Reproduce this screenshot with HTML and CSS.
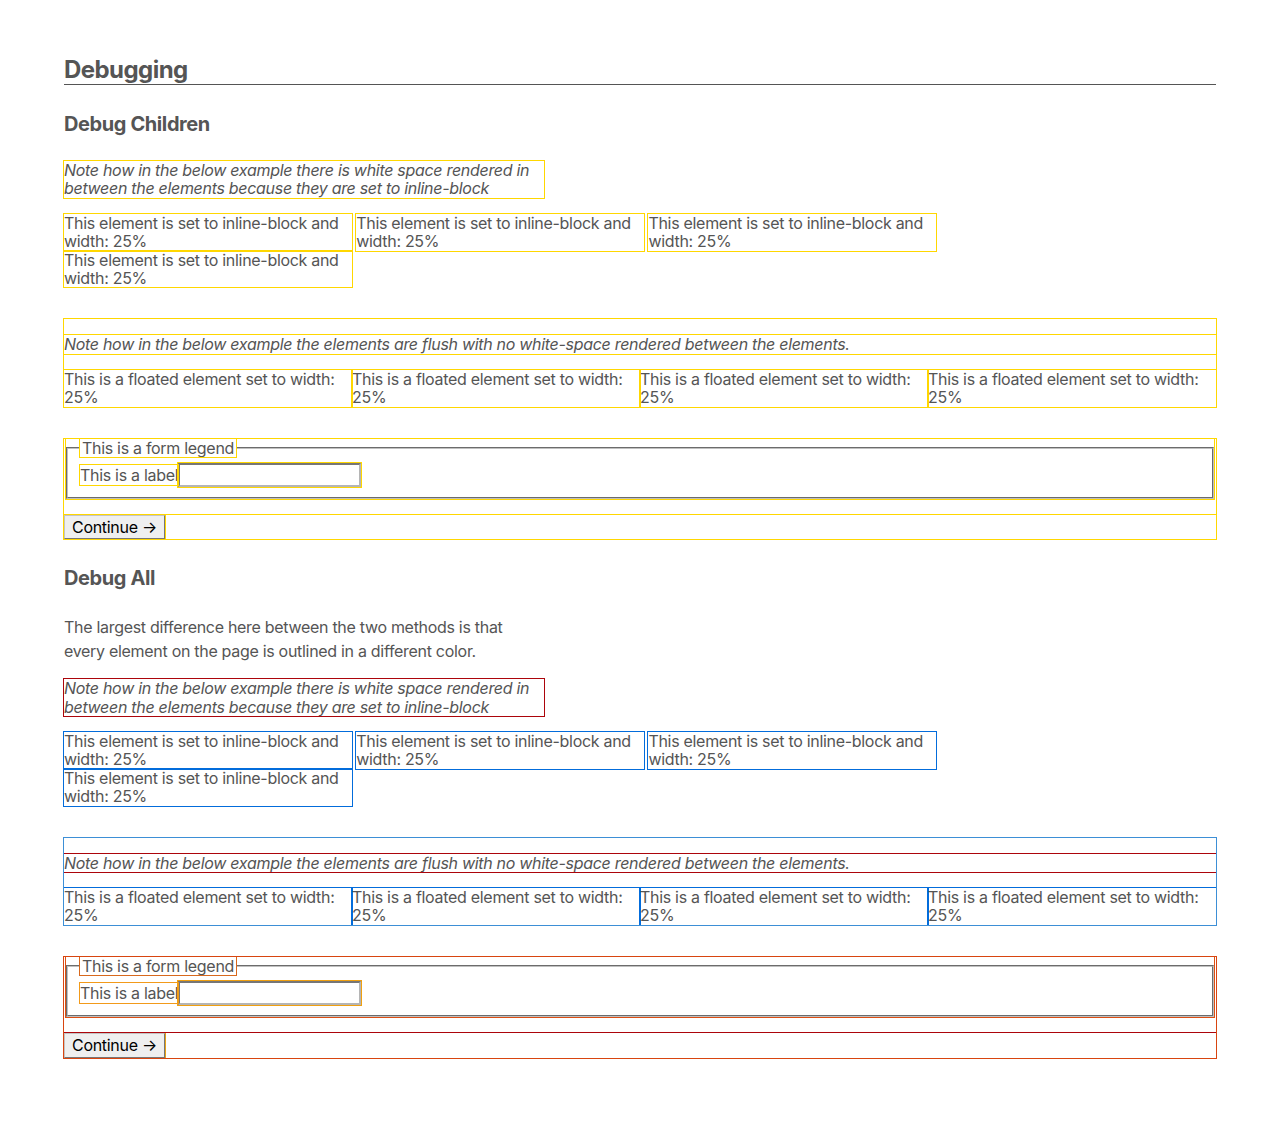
FILE: index.html
```html
<!DOCTYPE html>
<html lang="en">
<head>
<meta charset="utf-8">
<title>Debugging</title>
<link rel="stylesheet" href="styles.css">
</head>
<body>
<main class="page">
  <h1 class="title">Debugging</h1>

  <h2 class="subtitle">Debug Children</h2>
  <div class="debug-children">
    <p class="note measure">Note how in the below example there is white space rendered in between the elements because they are set to inline-block</p>
    <div class="dib">This element is set to inline-block and width: 25%</div>
    <div class="dib">This element is set to inline-block and width: 25%</div>
    <div class="dib">This element is set to inline-block and width: 25%</div>
    <div class="dib">This element is set to inline-block and width: 25%</div>
    <div class="flush">
      <p class="note">Note how in the below example the elements are flush with no white-space rendered between the elements.</p>
      <div class="fl">This is a floated element set to width: 25%</div><div class="fl">This is a floated element set to width: 25%</div><div class="fl">This is a floated element set to width: 25%</div><div class="fl">This is a floated element set to width: 25%</div>
    </div>
    <form class="demo-form">
      <fieldset class="fs">
        <legend class="lg">This is a form legend</legend>
        <label class="lb">This is a label</label><input class="in" type="text">
      </fieldset>
      <p class="btn-row"><button class="btn" type="button">Continue →</button></p>
    </form>
  </div>

  <h2 class="subtitle subtitle-all">Debug All</h2>
  <p class="copy measure">The largest difference here between the two methods is that every element on the page is outlined in a different color.</p>
  <div class="debug-all">
    <p class="note measure o-p">Note how in the below example there is white space rendered in between the elements because they are set to inline-block</p>
    <div class="dib o-div">This element is set to inline-block and width: 25%</div>
    <div class="dib o-div">This element is set to inline-block and width: 25%</div>
    <div class="dib o-div">This element is set to inline-block and width: 25%</div>
    <div class="dib o-div">This element is set to inline-block and width: 25%</div>
    <div class="flush o-wrap">
      <p class="note o-p">Note how in the below example the elements are flush with no white-space rendered between the elements.</p>
      <div class="fl o-div">This is a floated element set to width: 25%</div><div class="fl o-div">This is a floated element set to width: 25%</div><div class="fl o-div">This is a floated element set to width: 25%</div><div class="fl o-div">This is a floated element set to width: 25%</div>
    </div>
    <form class="demo-form o-form">
      <fieldset class="fs o-fs">
        <legend class="lg o-lg">This is a form legend</legend>
        <label class="lb o-lb">This is a label</label><input class="in o-in" type="text">
      </fieldset>
      <p class="btn-row o-p"><button class="btn o-btn" type="button">Continue →</button></p>
    </form>
  </div>
</main>
</body>
</html>
```

FILE: styles.css
```css
html, body {
  margin: 0;
  padding: 0;
  background: #fff;
}

body {
  font-family: Inter, "Helvetica Neue", Arial, sans-serif;
  font-size: 16px;
  line-height: 1.15;
  letter-spacing: -0.3px;
  color: #555;
}

.page {
  padding: 56px 64px 80px;
}

.title {
  margin: 0;
  font-size: 24px;
  line-height: 28px;
  font-weight: 700;
  letter-spacing: -0.55px;
  border-bottom: 1px solid #555;
}

.subtitle {
  margin: 27px 0 25px;
  font-size: 20px;
  line-height: 24px;
  font-weight: 700;
  letter-spacing: -0.4px;
}

.subtitle-all {
  margin-top: 27px;
}

.measure {
  max-width: 30em;
}

.note {
  font-style: italic;
  margin: 16px 0;
}

.copy {
  margin: 0 0 16px;
  line-height: 1.5;
}

.debug-children > .note:first-child,
.debug-all > .note:first-child {
  margin-top: 0;
}

.dib {
  display: inline-block;
  width: 25%;
  vertical-align: baseline;
}

.flush {
  display: flow-root;
  margin-top: 32px;
}

.fl {
  float: left;
  width: 25%;
}

.demo-form {
  margin: 32px 0 0;
}

.fs {
  margin: 0 2px;
  padding: 0.35em 0.75em 0.625em;
  border: 2px groove rgb(192, 192, 192);
}

.lg {
  padding: 0 2px;
}

.in {
  font-family: inherit;
  font-size: 100%;
  line-height: 1.15;
  margin: 0;
  width: 183px;
  box-sizing: border-box;
  padding: 1px 2px;
  border-width: 2px;
  border-style: solid;
  border-color: #767676 #b5b5b5 #b5b5b5 #767676;
  vertical-align: baseline;
}

.btn-row {
  margin: 16px 0 0;
}

.btn {
  font-family: inherit;
  font-size: 100%;
  line-height: 1.15;
  letter-spacing: -0.3px;
  margin: 0;
  color: #000;
  background: #efefef;
  border-width: 1px;
  border-style: solid;
  border-color: #c4c4c4 #767676 #767676 #c4c4c4;
  padding: 2px 7px 2px 7px;
}

/* debug children: every descendant gets a gold outline */
.debug-children * {
  outline: 1px solid gold;
}

/* debug all: each element type gets its own colour */
.o-p { outline: 1px solid #ac050b; }
.o-div { outline: 1px solid #036cdb; }
.o-wrap { outline: 1px solid #3d8fd6; }
.o-form { outline: 1px solid #d84510; }
.o-fs { outline: 1px solid #de4f12; }
.o-lg { outline: 1px solid #d8681c; }
.o-lb { outline: 1px solid #f29a1a; }
.o-in { outline: 1px solid #f0a010; }
.o-btn { outline: 1px solid #e8a317; }
```
